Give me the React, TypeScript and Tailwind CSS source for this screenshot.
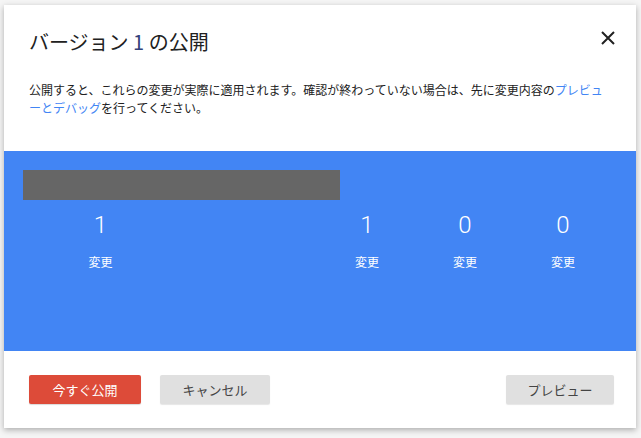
export default function App() {
  const stats = [
    { value: '1', label: '変更' },
    { value: '0', label: '変更' },
    { value: '0', label: '変更' },
  ];

  return (
    <div
      className="w-[641px] h-[438px] bg-[#f5f5f5] pt-[5px] pl-[4px]"
      style={{ fontFamily: '"Noto Sans CJK JP", Roboto, "Liberation Sans", sans-serif' }}
    >
      <div className="w-[632px] h-[423px] bg-white shadow-[0_2px_6px_rgba(0,0,0,0.3)] flex flex-col">
        {/* header */}
        <div className="flex justify-between items-start pl-[25px] pr-[16px] pt-[22px]">
          <h1 className="text-[20px] leading-[30px] text-[#212121] font-normal">
            バージョン <span className="text-[#33427a]">1</span> の公開
          </h1>
          <button className="mt-[-1px] p-[4px]">
            <svg width="16" height="16" viewBox="0 0 16 16">
              <path d="M2 2L14 14M14 2L2 14" stroke="#212121" strokeWidth="2" />
            </svg>
          </button>
        </div>

        <p className="px-[25px] mt-[24px] text-[12px] leading-[18px] text-[#212121]">
          公開すると、これらの変更が実際に適用されます。確認が終わっていない場合は、先に変更内容の
          <span className="text-[#4285f4]">プレビュ</span>
          <br />
          <span className="text-[#4285f4]">ーとデバッグ</span>を行ってください。
        </p>

        {/* stats */}
        <div className="mt-[34px] h-[200px] bg-[#4285f4] pl-[19px] pr-[24px] pt-[19px]">
          <div className="w-[317px] h-[30px] bg-[#666666]" />
          <div className="flex mt-[9px] text-white">
            <div className="w-[155px] flex flex-col items-center">
              <div className="text-[24px] leading-[32px] font-light" style={{ fontFamily: 'Roboto, sans-serif' }}>1</div>
              <div className="text-[12px] leading-[18px] mt-[12px]">変更</div>
            </div>
            <div className="flex-1" />
            {stats.map((s, i) => (
              <div key={i} className="w-[98px] flex flex-col items-center">
                <div className="text-[24px] leading-[32px] font-light" style={{ fontFamily: 'Roboto, sans-serif' }}>{s.value}</div>
                <div className="text-[12px] leading-[18px] mt-[12px]">{s.label}</div>
              </div>
            ))}
          </div>
        </div>

        {/* footer */}
        <div className="flex items-center pl-[25px] pr-[22px] pt-[24px]">
          <button className="w-[112px] h-[29px] rounded-[2px] bg-[#dd4b39] text-white text-[13px] shadow-[0_1px_1px_rgba(0,0,0,0.15)]">
            今すぐ公開
          </button>
          <button className="ml-[19px] w-[110px] h-[29px] rounded-[2px] bg-[#e0e0e0] text-[#444] text-[13px] shadow-[0_1px_1px_rgba(0,0,0,0.1)]">
            キャンセル
          </button>
          <div className="flex-1" />
          <button className="w-[108px] h-[29px] rounded-[2px] bg-[#e0e0e0] text-[#444] text-[13px] shadow-[0_1px_1px_rgba(0,0,0,0.1)]">
            プレビュー
          </button>
        </div>
      </div>
    </div>
  );
}
